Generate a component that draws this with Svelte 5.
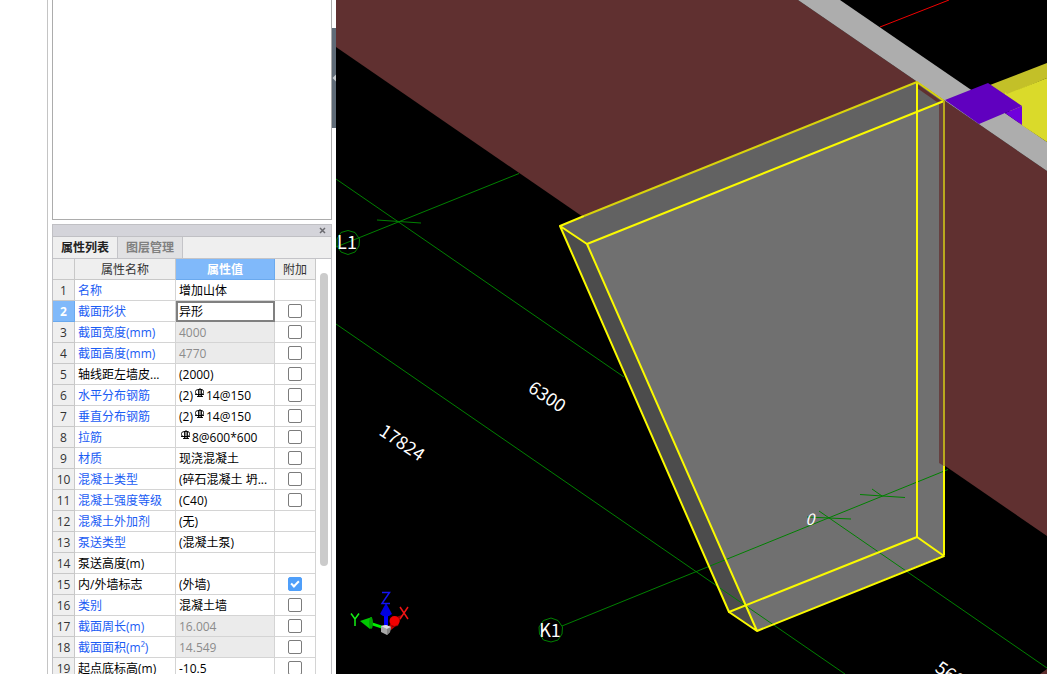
<script>
  let tab = $state('props');

  // addon: null = no tick box, false / true = its state
  let rows = $state([
    { name: '名称', value: '增加山体', blue: true, addon: null },
    { name: '截面形状', value: '异形', blue: true, addon: false, current: true },
    { name: '截面宽度(mm)', value: '4000', blue: true, addon: false, locked: true },
    { name: '截面高度(mm)', value: '4770', blue: true, addon: false, locked: true },
    { name: '轴线距左墙皮...', value: '(2000)', addon: false },
    { name: '水平分布钢筋', value: '14@150', count: '(2)', rebar: true, blue: true, addon: false },
    { name: '垂直分布钢筋', value: '14@150', count: '(2)', rebar: true, blue: true, addon: false },
    { name: '拉筋', value: '8@600*600', rebar: true, blue: true, addon: false },
    { name: '材质', value: '现浇混凝土', blue: true, addon: false },
    { name: '混凝土类型', value: '(碎石混凝土 坍...', blue: true, addon: false },
    { name: '混凝土强度等级', value: '(C40)', blue: true, addon: false },
    { name: '混凝土外加剂', value: '(无)', blue: true, addon: null },
    { name: '泵送类型', value: '(混凝土泵)', blue: true, addon: null },
    { name: '泵送高度(m)', value: '', addon: null },
    { name: '内/外墙标志', value: '(外墙)', addon: true },
    { name: '类别', value: '混凝土墙', blue: true, addon: false },
    { name: '截面周长(m)', value: '16.004', blue: true, addon: false, locked: true },
    { name: '截面面积(m²)', value: '14.549', blue: true, addon: false, locked: true },
    { name: '起点底标高(m)', value: '-10.5', addon: false }
  ]);
</script>

<div class="app">
  <aside>
    <div class="gutter"></div>
    <div class="docks">
      <div class="tree"></div>
      <section class="dock">
        <div class="title">
          <button class="close" aria-label="关闭">
            <svg width="7" height="7" viewBox="0 0 7 7"><path d="M1 1L6 6M6 1L1 6" stroke="#6b6b70" stroke-width="1.5" /></svg>
          </button>
        </div>
        <div class="tabs" role="tablist">
          <button role="tab" class:active={tab === 'props'} aria-selected={tab === 'props'} onclick={() => (tab = 'props')}>属性列表</button>
          <button role="tab" class:active={tab === 'layers'} aria-selected={tab === 'layers'} onclick={() => (tab = 'layers')}>图层管理</button>
        </div>
        <div class="body">
          <table>
            <colgroup><col class="c-num" /><col class="c-name" /><col class="c-value" /><col class="c-add" /></colgroup>
            <thead>
              <tr><th></th><th>属性名称</th><th class="hot">属性值</th><th>附加</th></tr>
            </thead>
            <tbody>
              {#each rows as row, i}
                <tr>
                  <th scope="row" class:hot={row.current}>{i + 1}</th>
                  <td class="name" class:blue={row.blue}>{row.name}</td>
                  <td class="value" class:locked={row.locked} class:current={row.current}>
                    {row.count ?? ''}{#if row.rebar}<svg class="rebar" width="10" height="10" viewBox="0 0 10 10" fill="none" stroke="#000"><path d="M3.5 1.5H6.5Q8.500 1.500 8.500 3.500V4.500Q8.500 6.500 6.500 6.500H2.500Q0.500 6.500 0.500 4.500V3.500Q0.500 1.500 3.500 1.500M3.500 1V9M6.500 1V9M5 0V9M0 6.500H9M2 8.500H8" stroke-width="0.900" /></svg>{/if}{row.value}
                  </td>
                  <td class="add">
                    {#if row.addon !== null}
                      <input type="checkbox" aria-label={row.name} bind:checked={row.addon} />
                    {/if}
                  </td>
                </tr>
              {/each}
            </tbody>
          </table>
          <div class="scroll"><div class="thumb"></div></div>
        </div>
      </section>
    </div>
    <div class="splitter">
      <button aria-label="折叠">
        <svg width="4" height="8" viewBox="0 0 4 8"><path d="M4 0.5V7.5L0.5 4Z" fill="#c8ccd0" /></svg>
      </button>
    </div>
  </aside>

  <main>
    <svg class="scene" viewBox="336 0 711 674" preserveAspectRatio="xMinYMin slice" role="img" aria-label="三维视图">
      <rect x="336" width="711" height="674" fill="#000" />
      <path d="M880 27L949 0" stroke="#f00000" fill="none" />

      <!-- slab and beam -->
      <path d="M336 0H798L1047 171V536L336 47Z" fill="#603030" />
      <path d="M1040 674L1047 669V674Z" fill="#603030" />
      <path d="M798 0H840L1047 142V171Z" fill="#adadad" />
      <path d="M990 85L1047 63V78L1005 96Z" fill="#c3c028" />
      <path d="M1007 94L1047 78V142L1020 124L1005 106V92Z" fill="#dada2a" />
      <path d="M945 100L988 83L1022 106L1005 113L979 124Z" fill="#6000bf" />
      <path d="M1005 113L1022 106V125Z" fill="#7000dc" />

      <!-- selected wall faces -->
      <path d="M587 244L944 101V555L757 631Z" fill="#707070" />
      <path d="M560 226L917 82L944 101L587 244Z" fill="#626262" />
      <path d="M560 226L587 244L757 631L729 612Z" fill="#4c4c4c" />
      <path d="M917 84L941 101L937 102L917 88Z" fill="#603030" />
      <path d="M939 102H944V466L939 463Z" fill="#654040" />

      <!-- axis grid -->
      <g class="grid">
        <path d="M336 179L624 377M336 324L845 674M819 511L1047 668" />
        <path d="M336 247L519 173.500M562 626L948 469.500" />
        <path d="M377 220L421 223M807 517L851 519M860 494.500L905 497.500M872 489L882 496" />
        <path d="M348 230.500L355 232.500L359.500 239L359 246L355 252L348 254.500L341 252L337 246V239L341 232.500Z" />
        <path d="M551 618L558 620.500L562.500 627L562 634L558 640L551 642L543.500 640L539.500 634L539 627L543.500 620.500Z" />
      </g>

      <!-- wall edges -->
      <g fill="none" stroke="#fafa00" stroke-width="2" stroke-linejoin="round">
        <path d="M560 226L587 244L944 101M917 82V537L729 612L560 226L584 216" />
        <path d="M587 244L757 631L729 612M757 631L944 556L917 537M944 466V555" />
        <path d="M584 216L917 82L944 101" stroke="#d9d30c" />
        <path d="M944 101V466" stroke="#b9a81e" />
      </g>

      <g class="label">
        <text x="347" y="249">L1</text>
        <text x="550" y="637">K1</text>
        <text transform="translate(547 397) rotate(34)" y="6">6300</text>
        <text transform="translate(402 443) rotate(34)" y="6">17824</text>
        <text class="small" x="810" y="525">0</text>
        <text transform="translate(954 677) rotate(34)" y="6">5600</text>
      </g>

      <!-- orientation triad -->
      <path d="M383 626L371 622V625L383 629Z" fill="#00f000" />
      <path d="M360 621L372 617L370 629Z" fill="#00c800" />
      <ellipse cx="371" cy="623" rx="2" ry="6" fill="#00a000" />
      <path d="M388 627L393 621L397 625L391 630Z" fill="#c80000" />
      <path d="M390 619L402 615L398 626L392 627Z" fill="#8c0000" />
      <circle cx="394.500" cy="621" r="5" fill="#f40000" />
      <path d="M384 615H388V627H384Z" fill="#0000ff" />
      <path d="M386 603L392 614Q386 619 380 614Z" fill="#0000e0" />
      <path d="M381 626L386 625L391 627L390 632L387 635L381 632Z" fill="#a8a8a8" />
      <path d="M381 626L386 625L391 627L387 629Z" fill="#dedede" />
      <path d="M387 629L391 627L390 632L387 635Z" fill="#858585" />
      <g fill="none" stroke-width="1.500">
        <path d="M382 592.500H389.500L382 603.500H390" stroke="#1414f0" />
        <path d="M351 613.500L355 619L359 613.500M355 619V626" stroke="#14f014" />
        <path d="M400 607L408 619M408 607L400 619" stroke="#f01414" />
      </g>
    </svg>
  </main>
</div>

<style>
  :global(body) { margin: 0; background: #fff; }
  .app {
    display: flex;
    height: 100vh;
    overflow: hidden;
    font: 12px/18px "Open Sans", "Noto Sans CJK SC", sans-serif;
    color: #000;
  }
  button { font: inherit; border: 0; padding: 0; margin: 0; }
  aside { display: flex; flex: none; background: #fff; }
  .gutter { width: 47px; border-right: 1px solid #c4c4c4; margin-right: 4px; }
  .docks { display: flex; flex-direction: column; width: 280px; gap: 4px; }
  .tree { flex: 0 0 219px; border: 1px solid #acacac; border-top: 0; }
  .dock { flex: 1; min-height: 0; display: flex; flex-direction: column; border: 1px solid #c0c0c4; border-bottom: 0; overflow: hidden; }
  .title { display: flex; justify-content: flex-end; flex: none; height: 11px; background: #d4d4da; border-bottom: 1px solid #c0c0c4; }
  .close { width: 18px; height: 11px; display: grid; place-items: center; background: none; }
  .tabs { display: flex; flex: none; height: 21px; background: #efefef; border-bottom: 1px solid #c4c4c8; }
  .tabs button { width: 65px; background: #e1e1e3; color: #808080; font-weight: 700; border-right: 1px solid #c4c4c8; white-space: nowrap; }
  .tabs button.active { background: #efefef; color: #222; }
  .body { display: flex; flex: 1; min-height: 0; }
  table { border-collapse: separate; border-spacing: 0; table-layout: fixed; width: 263px; flex: none; align-self: flex-start; }
  .c-num { width: 22px; }
  .c-name { width: 101px; }
  .c-value { width: 99px; }
  .c-add { width: 41px; }
  th, td { height: 18px; padding: 2px 0 0; border-right: 1px solid #d4d4d4; border-bottom: 1px solid #d4d4d4; white-space: nowrap; overflow: hidden; }
  th { background: #efefef; color: #333; font-weight: 400; border-color: #c8c8c8; }
  th.hot { background: #80b9fa; color: #fff; font-weight: 700; border-color: #6aa9ee; }
  td { padding-left: 3px; }
  .blue { color: #1a5cf4; }
  .locked { background: #ebebeb; color: #8c8c8c; }
  .current { outline: 2px solid #808080; outline-offset: -2px; }
  .rebar { display: inline-block; height: 10px; margin: -4px 1px 4px 2px; vertical-align: middle; }
  .add { height: 20px; padding: 0; text-align: center; line-height: 0; }
  input {
    appearance: none;
    box-sizing: border-box;
    width: 14px;
    height: 14px;
    margin: 0;
    border: 1px solid #7c7c7c;
    border-radius: 2px;
    background: #fff;
    vertical-align: middle;
  }
  input:checked { background: #4f9ffa; border-color: #4f9ffa; display: inline-grid; place-items: center; }
  input:checked::after { content: ""; width: 6px; height: 3px; border: solid #fff; border-width: 0 0 2px 2px; transform: rotate(-45deg) translate(1px, -1px); }
  .scroll { flex: 1; padding: 14px 3px 0 4px; }
  .thumb { height: 293px; border-radius: 4px; background: #cbcbcb; }
  .splitter { width: 4px; padding-top: 28px; }
  .splitter button { width: 4px; height: 100px; background: #5f6b77; display: grid; place-items: center; }
  main { flex: 1; min-width: 0; background: #000; }
  .scene { display: block; width: 100%; height: 100%; }
  .grid { fill: none; stroke: #008000; stroke-width: 1; }
  .label { fill: #fff; font: 18px "Noto Sans CJK SC", sans-serif; text-anchor: middle; }
  .small { font-size: 16px; font-style: italic; }
</style>
